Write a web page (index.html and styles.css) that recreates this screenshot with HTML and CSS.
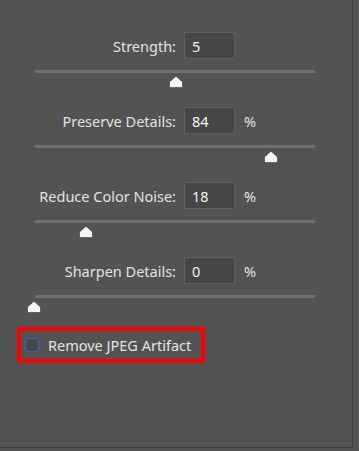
FILE: index.html
```html
<!DOCTYPE html>
<html>
<head>
<meta charset="utf-8">
<link rel="stylesheet" href="styles.css">
</head>
<body>
<div class="panel">
  <div class="group">
    <div class="field">
      <span class="label">Strength:</span>
      <span class="input">5</span>
    </div>
    <div class="track"><svg class="thumb" style="left:134px" width="14" height="12" viewBox="0 0 14 12"><path d="M6.1 0.9 Q7 0 7.9 0.9 L13.5 6 L13.5 11.5 L0.5 11.5 L0.5 6 Z" fill="#f4f4f4" stroke="#3c3c3c" stroke-width="0.6"/></svg></div>
  </div>
  <div class="group">
    <div class="field">
      <span class="label">Preserve Details:</span>
      <span class="input">84</span>
      <span class="unit">%</span>
    </div>
    <div class="track"><svg class="thumb" style="left:229px" width="14" height="12" viewBox="0 0 14 12"><path d="M6.1 0.9 Q7 0 7.9 0.9 L13.5 6 L13.5 11.5 L0.5 11.5 L0.5 6 Z" fill="#f4f4f4" stroke="#3c3c3c" stroke-width="0.6"/></svg></div>
  </div>
  <div class="group">
    <div class="field">
      <span class="label">Reduce Color Noise:</span>
      <span class="input">18</span>
      <span class="unit">%</span>
    </div>
    <div class="track"><svg class="thumb" style="left:44px" width="14" height="12" viewBox="0 0 14 12"><path d="M6.1 0.9 Q7 0 7.9 0.9 L13.5 6 L13.5 11.5 L0.5 11.5 L0.5 6 Z" fill="#f4f4f4" stroke="#3c3c3c" stroke-width="0.6"/></svg></div>
  </div>
  <div class="group">
    <div class="field">
      <span class="label">Sharpen Details:</span>
      <span class="input">0</span>
      <span class="unit">%</span>
    </div>
    <div class="track"><svg class="thumb" style="left:-8px" width="14" height="12" viewBox="0 0 14 12"><path d="M6.1 0.9 Q7 0 7.9 0.9 L13.5 6 L13.5 11.5 L0.5 11.5 L0.5 6 Z" fill="#f4f4f4" stroke="#3c3c3c" stroke-width="0.6"/></svg></div>
  </div>
  <div class="check-row">
    <span class="checkbox"></span>
    <span class="check-label">Remove JPEG Artifact</span>
  </div>
</div>
</body>
</html>
```

FILE: styles.css
```css
html, body {
  margin: 0;
  padding: 0;
  background: #535353;
}
body {
  font-family: "Noto Sans", "Open Sans", sans-serif;
  font-size: 14.5px;
  color: #e2e2e2;
}
.panel {
  width: 353px;
  height: 448px;
  box-sizing: border-box;
  border-right: 1px solid #3e3e3e;
  border-bottom: 1px solid #3e3e3e;
  padding-top: 32px;
  display: flex;
  flex-direction: column;
}
.group {
  display: flex;
  flex-direction: column;
  margin-bottom: 34px;
}
.group:nth-child(4) {
  margin-bottom: 0;
}
.field {
  display: flex;
  align-items: center;
  height: 27px;
}
.label {
  width: 176px;
  text-align: right;
}
.input {
  margin-left: 8px;
  width: 51px;
  height: 27px;
  box-sizing: border-box;
  border: 1px solid #5f5f5f;
  background: #464646;
  color: #f4f4f4;
  padding-left: 7px;
  display: flex;
  align-items: center;
}
.unit {
  margin-left: 9px;
}
.track {
  position: relative;
  margin-top: 11px;
  margin-left: 35px;
  width: 280px;
  height: 3px;
  background: #707070;
}
.thumb {
  position: absolute;
  top: 6px;
  display: block;
}
.check-row {
  margin-top: 29px;
  margin-left: 17px;
  width: 188px;
  height: 36px;
  box-sizing: border-box;
  border: 4px solid #ff0000;
  display: flex;
  align-items: center;
  padding-left: 4px;
}
.checkbox {
  width: 14px;
  height: 14px;
  box-sizing: border-box;
  border: 1.5px solid #2f6cc4;
  border-radius: 3px;
  background: #474747;
}
.check-label {
  margin-left: 9px;
  color: #e4e4e4;
}
```
